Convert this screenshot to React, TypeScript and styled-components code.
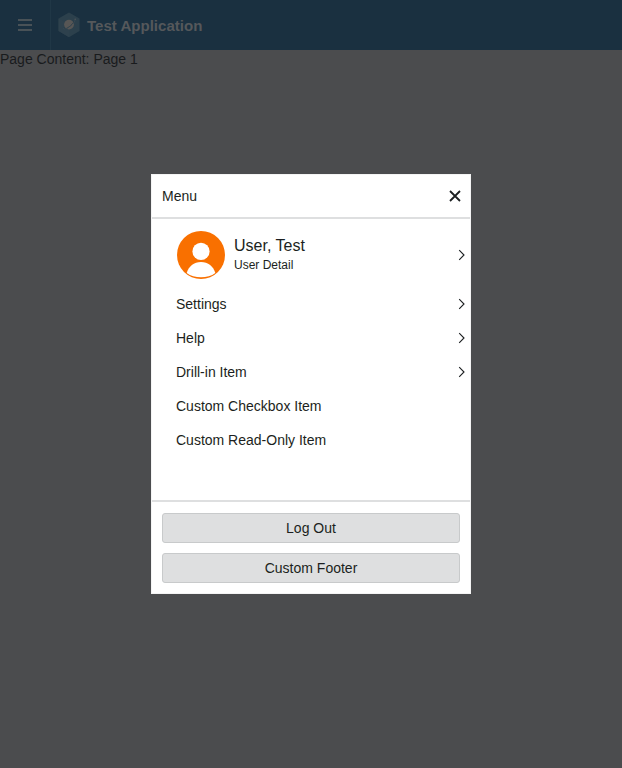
import React from 'react';
import styled, { createGlobalStyle } from 'styled-components';

const GlobalStyle = createGlobalStyle`
  *, *::before, *::after { box-sizing: border-box; }
  html, body, #root { height: 100%; margin: 0; }
  body {
    background: #4b4c4e;
    color: #1c1f21;
    font-family: "Liberation Sans", Arial, sans-serif;
    font-size: 14px;
    overflow: hidden;
  }
`;

const Page = styled.div`
  min-height: 100%;
`;

const Header = styled.header`
  display: flex;
  height: 50px;
  background: #1a3040;
  color: #55585b;
`;

const MenuToggle = styled.button`
  display: flex;
  align-items: center;
  justify-content: center;
  width: 51px;
  padding: 0;
  border: 0;
  border-right: 1px solid #203746;
  background: transparent;
  color: #5a5d5f;
`;

const Brand = styled.div`
  display: flex;
  align-items: center;
  gap: 7px;
  padding-left: 7px;
`;

const BrandName = styled.h1`
  margin: 0;
  padding-top: 1px;
  font-size: 15.05px;
  line-height: 18px;
  font-weight: 700;
`;

const Content = styled.main`
  padding-top: 1px;
  line-height: 16px;
  color: #191b1d;
`;

const Overlay = styled.div`
  position: fixed;
  inset: 0;
  display: flex;
  align-items: center;
  justify-content: center;
`;

const Dialog = styled.section`
  display: flex;
  flex-direction: column;
  width: 320px;
  height: 420px;
  border: 1px solid #f4f4f4;
  background: #fff;
`;

const DialogHeader = styled.div`
  display: flex;
  align-items: center;
  justify-content: space-between;
  height: 44px;
  padding: 0 9px 0 10px;
  border-bottom: 2px solid #dedfe0;
`;

const IconButton = styled.button`
  display: flex;
  padding: 0;
  border: 0;
  background: transparent;
  color: #1c1f21;
`;

const MenuBody = styled.div`
  flex: 1;
  padding-top: 4px;
`;

const UserRow = styled.div`
  display: flex;
  align-items: center;
  height: 64px;
  padding: 0 5px 0 25px;
`;

const UserText = styled.div`
  flex: 1;
  margin-left: 9px;
  padding-bottom: 2px;
`;

const UserName = styled.div`
  font-size: 16px;
  line-height: 19px;
`;

const UserDetail = styled.div`
  padding-top: 3px;
  font-size: 12px;
  line-height: 14px;
`;

const MenuItem = styled.div`
  display: flex;
  align-items: center;
  justify-content: space-between;
  height: 34px;
  padding: 0 5px 0 24px;
`;

const Footer = styled.footer`
  display: grid;
  gap: 10px;
  padding: 11px 10px 10px;
  border-top: 2px solid #dedfe0;
`;

const FooterButton = styled.button`
  height: 30px;
  padding: 0;
  border: 1px solid #c8cacb;
  border-radius: 3px;
  background: #dedfe0;
  color: #1c1f21;
  font: inherit;
`;

const Chevron = () => (
  <svg width="7" height="12" viewBox="0 0 7 12" fill="none" stroke="#1c1f21" strokeWidth="1.1">
    <path d="M1.2 1.2 6 6 1.2 10.8" />
  </svg>
);

const Hamburger = () => (
  <svg width="14" height="12" viewBox="0 0 14 12" fill="currentColor">
    <path d="M0 .2h14v1.5H0zM0 5.2h14v1.5H0zM0 10.2h14v1.5H0z" />
  </svg>
);

const Logo = () => (
  <svg width="22" height="26" viewBox="0 0 22 26">
    <path d="M11 .5 21.5 6.6v12.3L11 25.2.5 18.9V6.6z" fill="#2c404c" />
    <path d="M.5 6.6 11 12.8v12.4L.5 18.9z" fill="#30434e" opacity=".6" />
    <circle cx="11" cy="12.6" r="4.9" fill="#575655" />
    <path d="M6.2 15.6c-.5 1.8 1.4 1.6 4-.1 3-2 5.6-4.8 6.1-6.7" fill="none" stroke="#263a46" strokeWidth="1" />
    <path d="M5.4 16.2c.3 1.5 2.7.7 5.4-1.1 3.6-2.4 6.9-6.2 6-7.5" fill="none" stroke="#46525a" strokeWidth=".5" />
    <circle cx="17.2" cy="7.2" r=".7" fill="#50565a" />
  </svg>
);

const Avatar = () => (
  <svg width="48" height="48" viewBox="0 0 48 48">
    <circle cx="24" cy="24" r="24" fill="#f97000" />
    <circle cx="24" cy="20.4" r="8.6" fill="#fff" />
    <path d="M9.7 42C11.4 35.5 17 31 24 31s12.6 4.5 14.3 11C34.5 45 29.4 46.2 24 46.2S13.5 45 9.7 42Z" fill="#fff" />
  </svg>
);

const CloseIcon = () => (
  <svg width="12" height="12" viewBox="0 0 12 12" fill="none" stroke="currentColor" strokeWidth="1.8">
    <path d="m1 1 10 10M11 1 1 11" />
  </svg>
);

const items = [
  { label: 'Settings', drillIn: true },
  { label: 'Help', drillIn: true },
  { label: 'Drill-in Item', drillIn: true },
  { label: 'Custom Checkbox Item', drillIn: false },
  { label: 'Custom Read-Only Item', drillIn: false },
];

export default function App() {
  return (
    <>
      <GlobalStyle />
      <Page>
        <Header>
          <MenuToggle aria-label="Toggle menu"><Hamburger /></MenuToggle>
          <Brand>
            <Logo />
            <BrandName>Test Application</BrandName>
          </Brand>
        </Header>
        <Content>Page Content: Page 1</Content>
      </Page>
      <Overlay>
        <Dialog role="dialog" aria-label="Menu">
          <DialogHeader>
            <span>Menu</span>
            <IconButton aria-label="Close"><CloseIcon /></IconButton>
          </DialogHeader>
          <MenuBody>
            <UserRow>
              <Avatar />
              <UserText>
                <UserName>User, Test</UserName>
                <UserDetail>User Detail</UserDetail>
              </UserText>
              <Chevron />
            </UserRow>
            {items.map((item) => (
              <MenuItem key={item.label}>
                <span>{item.label}</span>
                {item.drillIn && <Chevron />}
              </MenuItem>
            ))}
          </MenuBody>
          <Footer>
            <FooterButton>Log Out</FooterButton>
            <FooterButton>Custom Footer</FooterButton>
          </Footer>
        </Dialog>
      </Overlay>
    </>
  );
}
